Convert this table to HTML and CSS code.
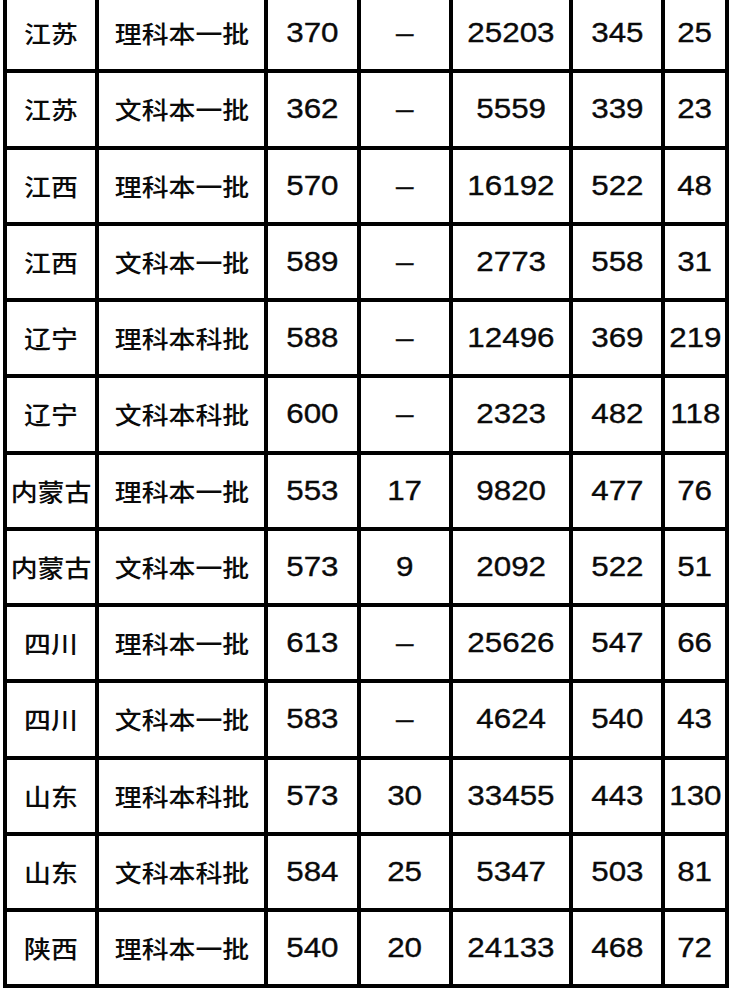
FILE: index.html
```html
<!DOCTYPE html>
<html lang="zh-CN">
<head>
<meta charset="utf-8">
<title>分数线</title>
<link rel="stylesheet" href="styles.css">
</head>
<body>
<div class="sheet">
  <div class="c t"><span>江苏</span></div><div class="c t"><span>理科本一批</span></div><div class="c n"><span>370</span></div><div class="c n"><span>–</span></div><div class="c n"><span>25203</span></div><div class="c n"><span>345</span></div><div class="c n"><span>25</span></div>
  <div class="c t"><span>江苏</span></div><div class="c t"><span>文科本一批</span></div><div class="c n"><span>362</span></div><div class="c n"><span>–</span></div><div class="c n"><span>5559</span></div><div class="c n"><span>339</span></div><div class="c n"><span>23</span></div>
  <div class="c t"><span>江西</span></div><div class="c t"><span>理科本一批</span></div><div class="c n"><span>570</span></div><div class="c n"><span>–</span></div><div class="c n"><span>16192</span></div><div class="c n"><span>522</span></div><div class="c n"><span>48</span></div>
  <div class="c t"><span>江西</span></div><div class="c t"><span>文科本一批</span></div><div class="c n"><span>589</span></div><div class="c n"><span>–</span></div><div class="c n"><span>2773</span></div><div class="c n"><span>558</span></div><div class="c n"><span>31</span></div>
  <div class="c t"><span>辽宁</span></div><div class="c t"><span>理科本科批</span></div><div class="c n"><span>588</span></div><div class="c n"><span>–</span></div><div class="c n"><span>12496</span></div><div class="c n"><span>369</span></div><div class="c n"><span>219</span></div>
  <div class="c t"><span>辽宁</span></div><div class="c t"><span>文科本科批</span></div><div class="c n"><span>600</span></div><div class="c n"><span>–</span></div><div class="c n"><span>2323</span></div><div class="c n"><span>482</span></div><div class="c n"><span>118</span></div>
  <div class="c t"><span>内蒙古</span></div><div class="c t"><span>理科本一批</span></div><div class="c n"><span>553</span></div><div class="c n"><span>17</span></div><div class="c n"><span>9820</span></div><div class="c n"><span>477</span></div><div class="c n"><span>76</span></div>
  <div class="c t"><span>内蒙古</span></div><div class="c t"><span>文科本一批</span></div><div class="c n"><span>573</span></div><div class="c n"><span>9</span></div><div class="c n"><span>2092</span></div><div class="c n"><span>522</span></div><div class="c n"><span>51</span></div>
  <div class="c t"><span>四川</span></div><div class="c t"><span>理科本一批</span></div><div class="c n"><span>613</span></div><div class="c n"><span>–</span></div><div class="c n"><span>25626</span></div><div class="c n"><span>547</span></div><div class="c n"><span>66</span></div>
  <div class="c t"><span>四川</span></div><div class="c t"><span>文科本一批</span></div><div class="c n"><span>583</span></div><div class="c n"><span>–</span></div><div class="c n"><span>4624</span></div><div class="c n"><span>540</span></div><div class="c n"><span>43</span></div>
  <div class="c t"><span>山东</span></div><div class="c t"><span>理科本科批</span></div><div class="c n"><span>573</span></div><div class="c n"><span>30</span></div><div class="c n"><span>33455</span></div><div class="c n"><span>443</span></div><div class="c n"><span>130</span></div>
  <div class="c t"><span>山东</span></div><div class="c t"><span>文科本科批</span></div><div class="c n"><span>584</span></div><div class="c n"><span>25</span></div><div class="c n"><span>5347</span></div><div class="c n"><span>503</span></div><div class="c n"><span>81</span></div>
  <div class="c t"><span>陕西</span></div><div class="c t"><span>理科本一批</span></div><div class="c n"><span>540</span></div><div class="c n"><span>20</span></div><div class="c n"><span>24133</span></div><div class="c n"><span>468</span></div><div class="c n"><span>72</span></div>
</div>
</body>
</html>
```
FILE: styles.css
```css
html, body {
  margin: 0;
  padding: 0;
  background: #fff;
}

body {
  overflow: hidden;
  font-family: "Liberation Sans", "Noto Sans CJK SC", sans-serif;
  color: #0a0a0a;
}

.sheet {
  display: grid;
  grid-template-columns: 88px 165px 89px 88px 116px 88px 60px;
  grid-auto-rows: 72.25px;
  gap: 4px;
  padding: 4px;
  background: #000;
  width: max-content;
  margin: -7px 0 0 3px;
}

.c {
  background: #fff;
  display: flex;
  align-items: center;
  justify-content: center;
  overflow: visible;
}

.c span {
  display: inline-block;
  line-height: 1;
  white-space: nowrap;
  transform: scaleX(1.12);
}

.t {
  font-family: "Noto Sans CJK SC", sans-serif;
  font-size: 24px;
  font-weight: 500;
}

.n {
  font-size: 28px;
  -webkit-text-stroke: 0.35px #0a0a0a;
}
```
